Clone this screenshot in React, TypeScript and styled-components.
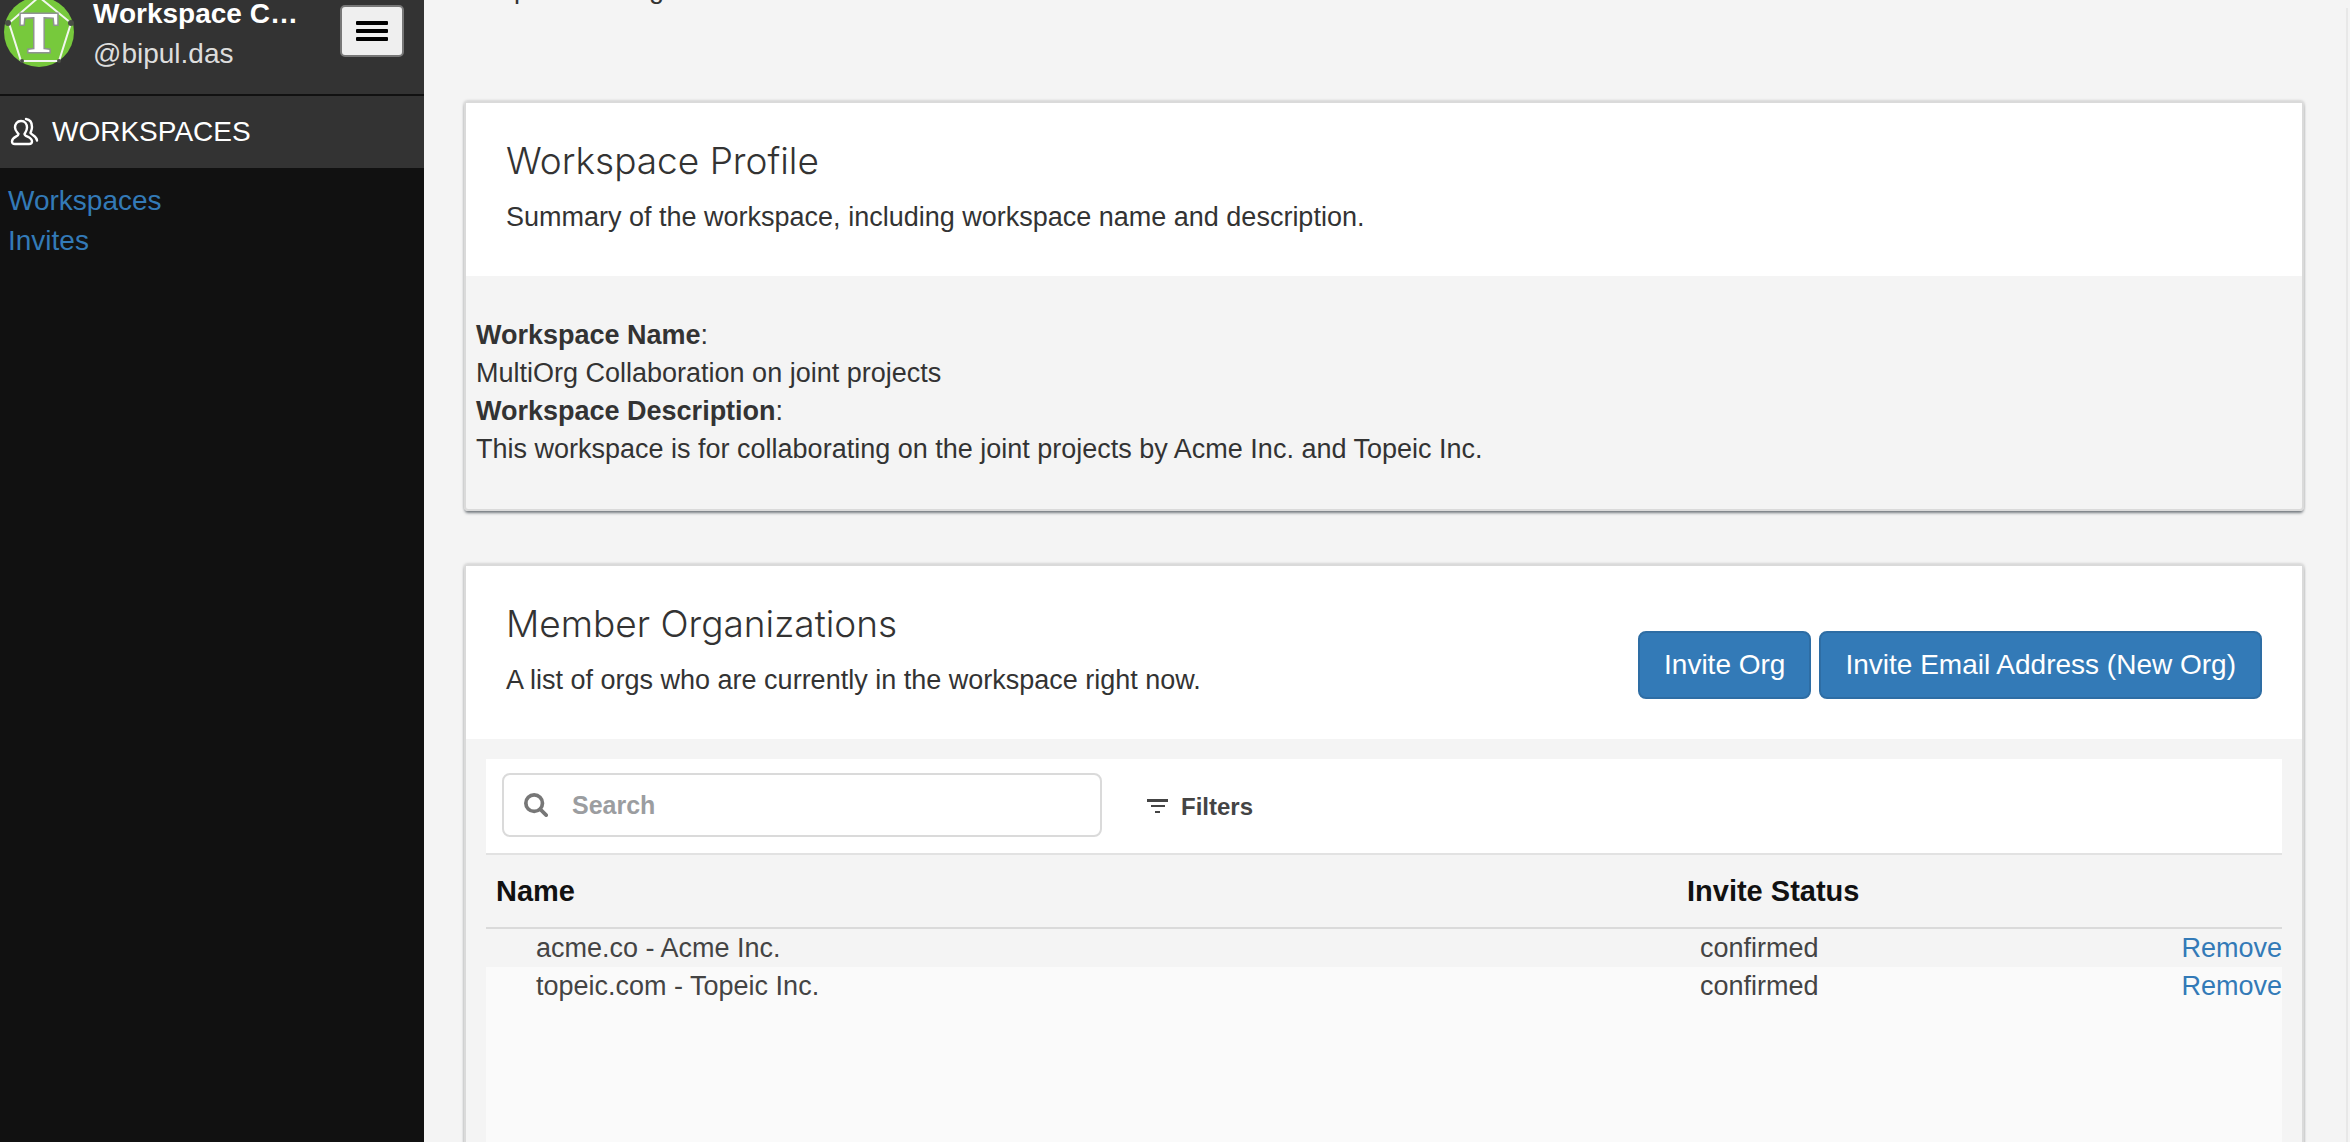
import React from "react";
import styled, { createGlobalStyle } from "styled-components";

const sans = `"Liberation Sans", Arial, sans-serif`;

const GlobalStyle = createGlobalStyle`
  *, *::before, *::after { box-sizing: border-box; }
  html { background: #f4f4f4; }
  body {
    margin: 0;
    font-family: ${sans};
    font-size: 27px;
    line-height: 38px;
    color: #333;
  }
  button, input { font-family: inherit; }
`;

const Shell = styled.div`
  display: flex;
  height: 100vh;
  overflow: hidden;
  background: #f4f4f4;
`;

const Sidebar = styled.aside`
  flex: 0 0 424px;
  background: #111;
  font-size: 28px;
  line-height: 40px;
`;

const Account = styled.header`
  display: flex;
  align-items: flex-start;
  height: 94px;
  padding-right: 20px;
  background: #333;
`;

const Avatar = styled.svg`
  flex: none;
  width: 76px;
  height: 74px;
  margin: -5px 16px 0 1px;
`;

const AccountText = styled.div`
  flex: 1;
  min-width: 0;
  color: #ddd;
`;

const AccountName = styled.div`
  margin-bottom: 6px;
  color: #fff;
  font-weight: 700;
  line-height: 28px;
`;

const MenuButton = styled.button`
  display: flex;
  flex-direction: column;
  align-items: center;
  justify-content: center;
  gap: 4px;
  width: 64px;
  height: 52px;
  margin-top: 5px;
  padding: 0;
  border: 2px solid #777;
  border-radius: 5px;
  background: #efefef;
`;

const MenuBar = styled.span`
  width: 32px;
  height: 4px;
  border-radius: 1px;
  background: #000;
`;

const SectionTitle = styled.h2`
  display: flex;
  align-items: center;
  gap: 12px;
  height: 74px;
  margin: 0;
  padding-left: 10px;
  border-top: 2px solid #111;
  background: #333;
  color: #fff;
  font-size: 28px;
  font-weight: 400;
`;

const SideNav = styled.nav`
  display: flex;
  flex-direction: column;
  align-items: flex-start;
  padding: 13px 8px;
`;

const Link = styled.a`
  color: #337ab7;
  text-decoration: none;
`;

const Main = styled.main`
  flex: 1;
  min-width: 0;
  margin-top: -30px;
`;

const PageTitle = styled.div`
  padding-left: 14px;
`;

const Content = styled.div`
  display: flex;
  flex-direction: column;
  gap: 53px;
  margin-right: 2px;
  padding: 93px 42px 40px 40px;
  border-right: 2px solid #e8e8e8;
`;

const Card = styled.section`
  border: 2px solid #dadada;
  border-radius: 4px;
  box-shadow: 0 3px 3px -1px rgba(30, 40, 50, 0.55), 0 0 3px rgba(0, 0, 0, 0.25);
`;

const CardHeader = styled.header`
  display: flex;
  align-items: flex-end;
  justify-content: space-between;
  padding: 38px 40px 40px;
  background: #fff;
`;

const CardTitle = styled.h3`
  margin: 0 0 17px;
  font-family: Inter, ${sans};
  font-size: 37px;
  font-weight: 300;
  line-height: 40px;
`;

const Text = styled.p`
  margin: 0;
`;

const Profile = styled.dl`
  margin: 0;
  padding: 40px 10px 41px;
`;

const Value = styled.dd`
  margin: 0;
`;

const Actions = styled.div`
  display: flex;
  gap: 8px;
`;

const PrimaryButton = styled.button`
  height: 68px;
  padding: 0 24px;
  border: 2px solid #2e6da4;
  border-radius: 8px;
  background: #337ab7;
  color: #fff;
  font-size: 28px;
  line-height: 40px;
`;

const List = styled.div`
  min-height: 480px;
  margin: 20px;
  background: #fafafa;
`;

const Toolbar = styled.div`
  display: flex;
  align-items: center;
  gap: 45px;
  height: 96px;
  padding: 0 16px 2px;
  border-bottom: 2px solid #e2e2e2;
  background: #fff;
`;

const SearchBox = styled.label`
  display: flex;
  align-items: center;
  gap: 24px;
  flex: 0 1 600px;
  height: 64px;
  padding: 0 20px;
  border: 2px solid #dadada;
  border-radius: 8px;
`;

const SearchInput = styled.input`
  flex: 1;
  min-width: 0;
  padding: 0;
  border: 0;
  outline: 0;
  background: transparent;
  color: #333;
  font-size: 25px;
  font-weight: 700;
  line-height: 38px;
  &::placeholder { color: #9b9da0; opacity: 1; }
`;

const FilterButton = styled.button`
  display: flex;
  align-items: center;
  gap: 12px;
  padding: 4px 0 0;
  border: 0;
  background: none;
  color: #444;
  font-size: 24px;
  font-weight: 700;
  line-height: 38px;
`;

const Table = styled.table`
  width: 100%;
  border-collapse: separate;
  border-spacing: 0;
  table-layout: fixed;
  color: #444;
`;

const HeadCell = styled.th<{ $width?: string }>`
  width: ${(p) => p.$width ?? "auto"};
  height: 74px;
  padding: 0 10px;
  border-bottom: 2px solid #dadada;
  background: #f4f4f4;
  color: #111;
  font-size: 29px;
  font-weight: 700;
  text-align: left;
`;

const Row = styled.tr`
  &:nth-child(odd) { background: #f4f4f4; }
`;

const Cell = styled.td<{ $indent?: number; $end?: boolean }>`
  padding: 0 0 0 ${(p) => p.$indent ?? 0}px;
  text-align: ${(p) => (p.$end ? "right" : "left")};
`;

const orgs = [
  { name: "acme.co - Acme Inc.", status: "confirmed" },
  { name: "topeic.com - Topeic Inc.", status: "confirmed" },
];

const Logo = () => (
  <Avatar viewBox="0 0 76 74" role="img" aria-label="Topeic">
    <circle cx="38" cy="37" r="35" fill="#77c93c" />
    <path d="M38 2 L70 28 L58 66 H20 L8 28 Z" fill="none" stroke="#f2f7ee" strokeWidth="2" />
    <g fill="#4a4f46">
      <circle cx="7" cy="28" r="3" />
      <circle cx="70" cy="28" r="3" />
      <circle cx="21" cy="66" r="2" />
      <circle cx="58" cy="66" r="2" />
    </g>
    <text x="38" y="57" textAnchor="middle" fontFamily="Liberation Serif, serif" fontWeight="700" fontSize="57" fill="#fff" stroke="#8f9391" strokeWidth="3" paintOrder="stroke">T</text>
  </Avatar>
);

const UsersIcon = () => (
  <svg width="30" height="30" viewBox="0 0 30 30" fill="none" stroke="#fff" strokeWidth="2.4" strokeLinecap="round" strokeLinejoin="round" aria-hidden="true">
    <path d="M11 4c4 0 6 3 6 6.500c0 3-1.500 4.500-2.500 6.500c0 3 7.500 2.500 7.500 7.500c0 2-1 2.500-3 2.500H5c-2 0-3-.5-3-2.500c0-5 6.500-4.500 6.500-7.500C7 15 5 13.500 5 10.500C5 7 7 4 11 4z" />
    <path d="M16 2c4 .5 6 4 6 8c0 3-1 4-1.500 6c1 2 6.500 3 6.500 7.500" />
  </svg>
);

const SearchIcon = () => (
  <svg width="24" height="24" viewBox="0 0 26 26" fill="none" stroke="#777" strokeWidth="4" strokeLinecap="round" aria-hidden="true">
    <circle cx="11" cy="11" r="9" />
    <path d="M18 18l6 6" />
  </svg>
);

const FilterIcon = () => (
  <svg width="22" height="16" viewBox="0 0 22 16" fill="#444" aria-hidden="true">
    <path d="M0 0h21v3H0zM4 6h14v2H4zM8 12h5v2H8z" />
  </svg>
);

export default function App() {
  return (
    <>
      <GlobalStyle />
      <Shell>
        <Sidebar>
          <Account>
            <Logo />
            <AccountText>
              <AccountName>Workspace C…</AccountName>
              <div>@bipul.das</div>
            </AccountText>
            <MenuButton aria-label="Menu">
              <MenuBar />
              <MenuBar />
              <MenuBar />
            </MenuButton>
          </Account>
          <SectionTitle>
            <UsersIcon />
            WORKSPACES
          </SectionTitle>
          <SideNav>
            <Link href="#workspaces">Workspaces</Link>
            <Link href="#invites">Invites</Link>
          </SideNav>
        </Sidebar>
        <Main>
          <PageTitle>Workspace Settings</PageTitle>
          <Content>
            <Card>
              <CardHeader>
                <div>
                  <CardTitle>Workspace Profile</CardTitle>
                  <Text>Summary of the workspace, including workspace name and description.</Text>
                </div>
              </CardHeader>
              <Profile>
                <dt><b>Workspace Name</b>:</dt>
                <Value>MultiOrg Collaboration on joint projects</Value>
                <dt><b>Workspace Description</b>:</dt>
                <Value>This workspace is for collaborating on the joint projects by Acme Inc. and Topeic Inc.</Value>
              </Profile>
            </Card>
            <Card>
              <CardHeader>
                <div>
                  <CardTitle>Member Organizations</CardTitle>
                  <Text>A list of orgs who are currently in the workspace right now.</Text>
                </div>
                <Actions>
                  <PrimaryButton>Invite Org</PrimaryButton>
                  <PrimaryButton>Invite Email Address (New Org)</PrimaryButton>
                </Actions>
              </CardHeader>
              <List>
                <Toolbar>
                  <SearchBox>
                    <SearchIcon />
                    <SearchInput type="text" placeholder="Search" aria-label="Search" />
                  </SearchBox>
                  <FilterButton>
                    <FilterIcon />
                    Filters
                  </FilterButton>
                </Toolbar>
                <Table>
                  <thead>
                    <tr>
                      <HeadCell scope="col">Name</HeadCell>
                      <HeadCell scope="col" $width="25%">Invite Status</HeadCell>
                      <HeadCell as="td" $width="156px" />
                    </tr>
                  </thead>
                  <tbody>
                    {orgs.map((org) => (
                      <Row key={org.name}>
                        <Cell $indent={50}>{org.name}</Cell>
                        <Cell $indent={23}>{org.status}</Cell>
                        <Cell $end>
                          <Link href="#remove">Remove</Link>
                        </Cell>
                      </Row>
                    ))}
                  </tbody>
                </Table>
              </List>
            </Card>
          </Content>
        </Main>
      </Shell>
    </>
  );
}
